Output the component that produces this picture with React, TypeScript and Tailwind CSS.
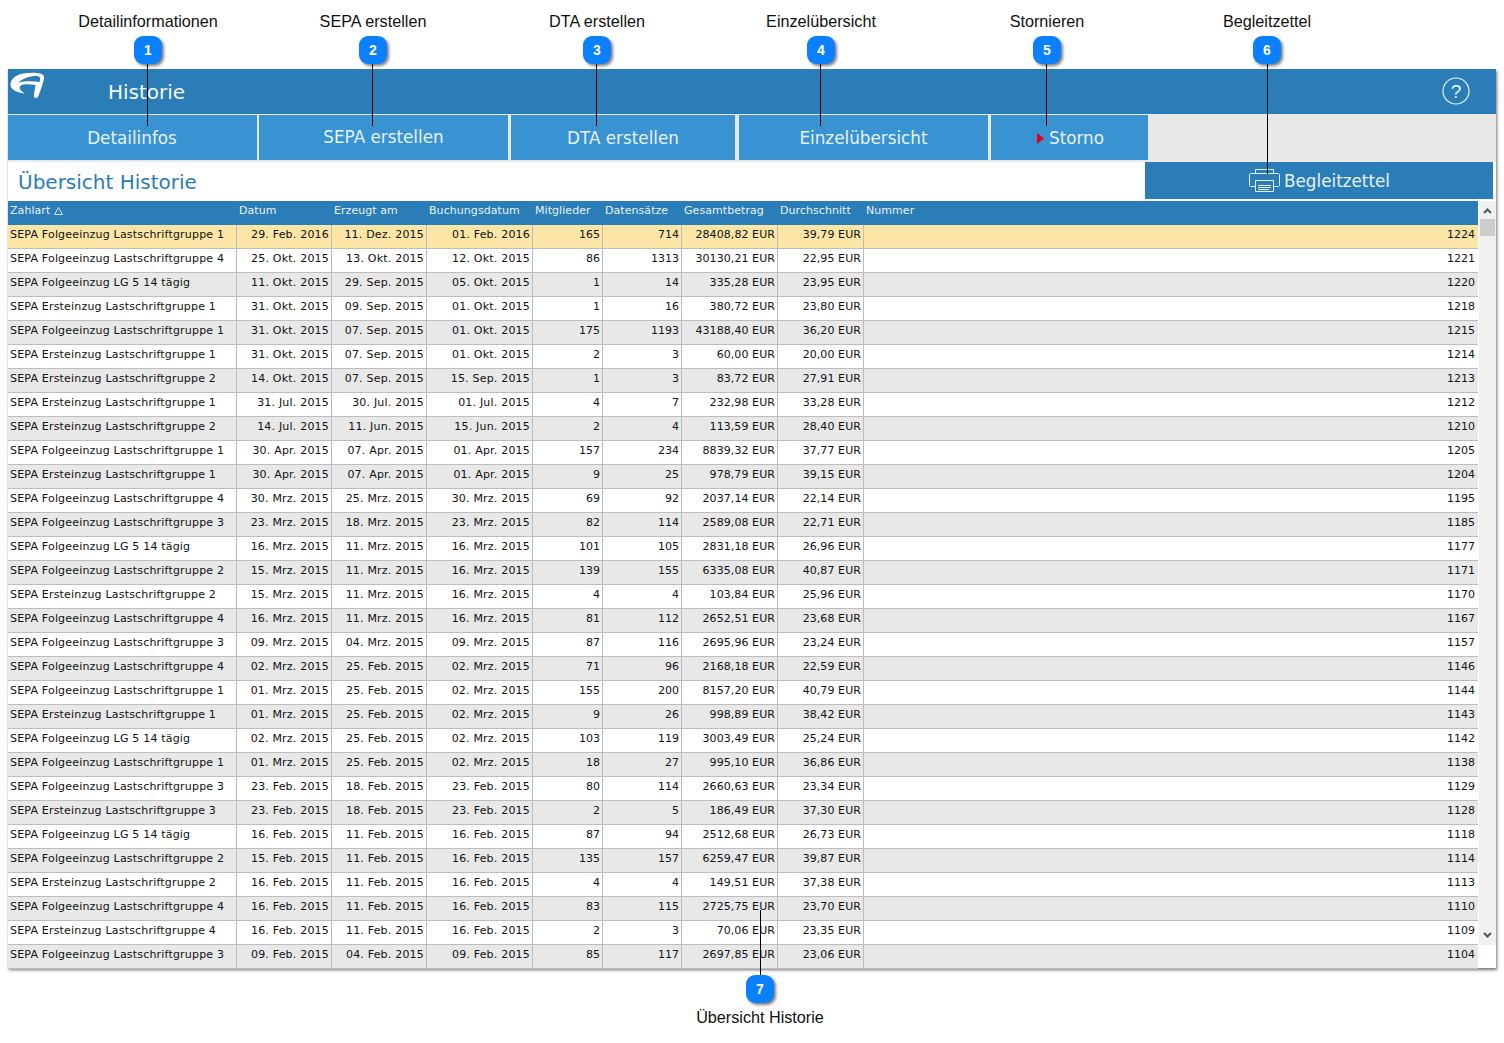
const rows: string[][] = `SEPA Folgeeinzug Lastschriftgruppe 1|29. Feb. 2016|11. Dez. 2015|01. Feb. 2016|165|714|28408,82 EUR|39,79 EUR|1224
SEPA Folgeeinzug Lastschriftgruppe 4|25. Okt. 2015|13. Okt. 2015|12. Okt. 2015|86|1313|30130,21 EUR|22,95 EUR|1221
SEPA Folgeeinzug LG 5 14 tägig|11. Okt. 2015|29. Sep. 2015|05. Okt. 2015|1|14|335,28 EUR|23,95 EUR|1220
SEPA Ersteinzug Lastschriftgruppe 1|31. Okt. 2015|09. Sep. 2015|01. Okt. 2015|1|16|380,72 EUR|23,80 EUR|1218
SEPA Folgeeinzug Lastschriftgruppe 1|31. Okt. 2015|07. Sep. 2015|01. Okt. 2015|175|1193|43188,40 EUR|36,20 EUR|1215
SEPA Ersteinzug Lastschriftgruppe 1|31. Okt. 2015|07. Sep. 2015|01. Okt. 2015|2|3|60,00 EUR|20,00 EUR|1214
SEPA Ersteinzug Lastschriftgruppe 2|14. Okt. 2015|07. Sep. 2015|15. Sep. 2015|1|3|83,72 EUR|27,91 EUR|1213
SEPA Ersteinzug Lastschriftgruppe 1|31. Jul. 2015|30. Jul. 2015|01. Jul. 2015|4|7|232,98 EUR|33,28 EUR|1212
SEPA Ersteinzug Lastschriftgruppe 2|14. Jul. 2015|11. Jun. 2015|15. Jun. 2015|2|4|113,59 EUR|28,40 EUR|1210
SEPA Folgeeinzug Lastschriftgruppe 1|30. Apr. 2015|07. Apr. 2015|01. Apr. 2015|157|234|8839,32 EUR|37,77 EUR|1205
SEPA Ersteinzug Lastschriftgruppe 1|30. Apr. 2015|07. Apr. 2015|01. Apr. 2015|9|25|978,79 EUR|39,15 EUR|1204
SEPA Folgeeinzug Lastschriftgruppe 4|30. Mrz. 2015|25. Mrz. 2015|30. Mrz. 2015|69|92|2037,14 EUR|22,14 EUR|1195
SEPA Folgeeinzug Lastschriftgruppe 3|23. Mrz. 2015|18. Mrz. 2015|23. Mrz. 2015|82|114|2589,08 EUR|22,71 EUR|1185
SEPA Folgeeinzug LG 5 14 tägig|16. Mrz. 2015|11. Mrz. 2015|16. Mrz. 2015|101|105|2831,18 EUR|26,96 EUR|1177
SEPA Folgeeinzug Lastschriftgruppe 2|15. Mrz. 2015|11. Mrz. 2015|16. Mrz. 2015|139|155|6335,08 EUR|40,87 EUR|1171
SEPA Ersteinzug Lastschriftgruppe 2|15. Mrz. 2015|11. Mrz. 2015|16. Mrz. 2015|4|4|103,84 EUR|25,96 EUR|1170
SEPA Folgeeinzug Lastschriftgruppe 4|16. Mrz. 2015|11. Mrz. 2015|16. Mrz. 2015|81|112|2652,51 EUR|23,68 EUR|1167
SEPA Folgeeinzug Lastschriftgruppe 3|09. Mrz. 2015|04. Mrz. 2015|09. Mrz. 2015|87|116|2695,96 EUR|23,24 EUR|1157
SEPA Folgeeinzug Lastschriftgruppe 4|02. Mrz. 2015|25. Feb. 2015|02. Mrz. 2015|71|96|2168,18 EUR|22,59 EUR|1146
SEPA Folgeeinzug Lastschriftgruppe 1|01. Mrz. 2015|25. Feb. 2015|02. Mrz. 2015|155|200|8157,20 EUR|40,79 EUR|1144
SEPA Ersteinzug Lastschriftgruppe 1|01. Mrz. 2015|25. Feb. 2015|02. Mrz. 2015|9|26|998,89 EUR|38,42 EUR|1143
SEPA Folgeeinzug LG 5 14 tägig|02. Mrz. 2015|25. Feb. 2015|02. Mrz. 2015|103|119|3003,49 EUR|25,24 EUR|1142
SEPA Folgeeinzug Lastschriftgruppe 1|01. Mrz. 2015|25. Feb. 2015|02. Mrz. 2015|18|27|995,10 EUR|36,86 EUR|1138
SEPA Folgeeinzug Lastschriftgruppe 3|23. Feb. 2015|18. Feb. 2015|23. Feb. 2015|80|114|2660,63 EUR|23,34 EUR|1129
SEPA Ersteinzug Lastschriftgruppe 3|23. Feb. 2015|18. Feb. 2015|23. Feb. 2015|2|5|186,49 EUR|37,30 EUR|1128
SEPA Folgeeinzug LG 5 14 tägig|16. Feb. 2015|11. Feb. 2015|16. Feb. 2015|87|94|2512,68 EUR|26,73 EUR|1118
SEPA Folgeeinzug Lastschriftgruppe 2|15. Feb. 2015|11. Feb. 2015|16. Feb. 2015|135|157|6259,47 EUR|39,87 EUR|1114
SEPA Ersteinzug Lastschriftgruppe 2|16. Feb. 2015|11. Feb. 2015|16. Feb. 2015|4|4|149,51 EUR|37,38 EUR|1113
SEPA Folgeeinzug Lastschriftgruppe 4|16. Feb. 2015|11. Feb. 2015|16. Feb. 2015|83|115|2725,75 EUR|23,70 EUR|1110
SEPA Ersteinzug Lastschriftgruppe 4|16. Feb. 2015|11. Feb. 2015|16. Feb. 2015|2|3|70,06 EUR|23,35 EUR|1109
SEPA Folgeeinzug Lastschriftgruppe 3|09. Feb. 2015|04. Feb. 2015|09. Feb. 2015|85|117|2697,85 EUR|23,06 EUR|1104`
  .split("\n")
  .map((l) => l.split("|"));

const cols = "grid-cols-[229px_95px_95px_106px_70px_79px_96px_86px_614px]";
const heads = ["Zahlart", "Datum", "Erzeugt am", "Buchungsdatum", "Mitglieder", "Datensätze", "Gesamtbetrag", "Durchschnitt", "Nummer"];
const callouts = [
  { n: 1, x: 148, label: "Detailinformationen", end: 126 },
  { n: 2, x: 373, label: "SEPA erstellen", end: 126 },
  { n: 3, x: 597, label: "DTA erstellen", end: 126 },
  { n: 4, x: 821, label: "Einzelübersicht", end: 126 },
  { n: 5, x: 1047, label: "Stornieren", end: 126 },
  { n: 6, x: 1267, label: "Begleitzettel", end: 174 },
];
const Badge = ({ n, x, y }: { n: number; x: number; y: number }) => (
  <div
    className="absolute w-[28px] h-[28px] rounded-[9px] bg-[#0a80ff] text-white flex items-center justify-center text-[14px] font-bold shadow-[2px_2px_3px_rgba(0,0,0,0.5)] font-['Liberation_Sans',sans-serif]"
    style={{ left: x - 14, top: y }}
  >
    {n}
  </div>
);
const Line = ({ x, top, bottom }: { x: number; top: number; bottom: number }) => (
  <div className="absolute w-[1px] bg-black" style={{ left: x, top, height: bottom - top }} />
);
const Label = ({ x, y, text }: { x: number; y: number; text: string }) => (
  <div className="absolute w-[200px] text-center text-[16.2px] leading-[18px] text-[#111] font-['Liberation_Sans',sans-serif]" style={{ left: x - 100, top: y }}>
    {text}
  </div>
);

function cellClass(j: number) {
  if (j === 0) return "pl-[2px] tracking-[0.19px] border-r border-[#bdbdbd]";
  if (j === 8) return "pr-[3px] text-right";
  if (j <= 3) return "pr-[2px] text-right tracking-[0.2px] border-r border-[#bdbdbd]";
  if (j === 6 || j === 7) return "pr-[2px] text-right tracking-[0.08px] border-r border-[#bdbdbd]";
  return "pr-[2px] text-right border-r border-[#bdbdbd]";
}

export default function App() {
  return (
    <div className="relative w-[1504px] h-[1043px] bg-white overflow-hidden font-['DejaVu_Sans','Verdana',sans-serif]">
      <div className="pt-[69px] pl-[8px]">
        <div className="w-[1488px] h-[899px] bg-[#e8e8e8] shadow-[1px_2px_3px_rgba(0,0,0,0.55)] flex flex-col">
          <header className="h-[45px] shrink-0 bg-[#2a7db6] flex items-start relative text-white">
            <svg width="38" height="32" viewBox="0 0 38 32" className="mt-[1px] shrink-0">
              <path
                fillRule="evenodd"
                fill="#fff"
                d="M2.5 13.5C3.5 8 9 4.5 15 3.5 21 2.6 28 2.6 32 3.5 35 4.2 36.5 5.5 36 8.5 35 14 32 22 30 27 29 28.5 26.5 28.3 25.8 27 26 23 27 19 27.5 15 23 14.2 18 14 14.5 14.8 12 15.5 11 17.5 12.5 20 14 21.5 15.5 22.5 16.5 23.5 12 23 5 21 3 17 2.6 15.7 2.4 14.5 2.5 13.5ZM10.5 12.5C15 8.5 21 6 28 6 32 6 33 8 31.5 12 25 11 17 11 10.5 12.5Z"
              />
            </svg>
            <span className="ml-[62px] mt-[12px] text-[20px] leading-[23px] text-[#f4fbff]">Historie</span>
            <svg width="28" height="28" viewBox="0 0 28 28" className="absolute right-[26px] top-[8px]">
              <circle cx="14" cy="14" r="13" fill="none" stroke="#e9f3fa" strokeWidth="1.2" />
              <text x="14" y="20.5" textAnchor="middle" fontSize="19" fill="#e9f3fa" fontFamily="Liberation Sans">?</text>
            </svg>
          </header>
          <nav className="mt-[1px] h-[45px] shrink-0 flex text-[16.8px] text-[#e6f2fa]">
            <div className="w-[249px] bg-[#3993d2] flex items-center justify-center pr-[1px] pt-[2px]">Detailinfos</div>
            <div className="ml-[2px] w-[249px] bg-[#3993d2] flex items-center justify-center pt-[1px]">SEPA erstellen</div>
            <div className="ml-[3px] w-[224px] bg-[#3993d2] flex items-center justify-center pt-[2px]">DTA erstellen</div>
            <div className="ml-[4px] w-[249px] bg-[#3993d2] flex items-center justify-center pt-[2px]">Einzelübersicht</div>
            <div className="ml-[3px] w-[157px] bg-[#3993d2] flex items-center justify-center gap-[5px] pt-[2px] pl-[2px]">
              <svg width="7" height="11" viewBox="0 0 7 11"><path d="M0 0L7 5.5L0 11Z" fill="#e2001a" /></svg>
              <span>Storno</span>
            </div>
          </nav>
          <div className="mt-[2px] h-[39px] shrink-0 bg-white flex items-start justify-between">
            <div className="pl-[10px] pt-[1px] text-[20px] leading-[39px] text-[#2a7db6]">Übersicht Historie</div>
            <div className="w-[348px] h-[37px] mr-[3px] bg-[#2a7db6] flex items-center justify-center gap-[4px] text-[16.8px] text-[#e6f2fa]">
              <svg width="31" height="23" viewBox="0 0 31 23" fill="none" stroke="#e6f2fa" strokeWidth="1" className="ml-[1px]">
                <path d="M6.5 4.5V.5H24.5V4.5" />
                <path d="M6.5 17.5H2C1 17.5.5 17 .5 16V6C.5 5 1 4.5 2 4.5H29C30 4.5 30.5 5 30.5 6V16C30.5 17 30 17.5 29 17.5H24.5" />
                <path d="M6.5 11.5H24.5V22.5H6.5Z" fill="#2a7db6" />
                <path d="M9 16.5H22M9 18.5H22M9 20.5H20" />
              </svg>
              <span className="pt-[3px]">Begleitzettel</span>
            </div>
          </div>
          <div className="flex flex-1 min-h-0 items-start bg-white">
            <div className="w-[1470px] shrink-0">
              <div className={`grid ${cols} h-[24px] bg-[#2a7db6] text-[11px] leading-[20px] tracking-[0.06px] text-[#e6f2fa]`}>
                {heads.map((h, i) => (
                  <div key={h} className="pl-[2px] whitespace-nowrap">
                    {h}
                    {i === 0 && (
                      <svg width="9" height="8" viewBox="0 0 9 8" className="inline-block ml-[4px] align-[-1px]">
                        <path d="M4.5 .5L8.5 7.5H.5Z" fill="none" stroke="#e6f2fa" strokeWidth=".9" />
                      </svg>
                    )}
                  </div>
                ))}
              </div>
              {rows.map((r, i) => (
                <div
                  key={r[8]}
                  className={`grid ${cols} h-[24px] border-b border-[#bdbdbd] text-[11px] leading-[20px] text-[#111] ${
                    i === 0 ? "bg-[#fce5a5]" : i % 2 === 0 ? "bg-[#e8e8e8]" : "bg-white"
                  }`}
                >
                  {r.map((c, j) => (
                    <div key={j} className={`h-[23px] whitespace-nowrap ${cellClass(j)}`}>
                      {c}
                    </div>
                  ))}
                </div>
              ))}
            </div>
            <div className="w-[17px] h-[744px] bg-[#f0f0f0] ml-[1px] flex flex-col items-center shrink-0">
              <svg width="9" height="6" viewBox="0 0 9 6" className="mt-[7px]"><path d="M1 5L4.5 1.5L8 5" fill="none" stroke="#555" strokeWidth="2" /></svg>
              <div className="mt-[5px] w-[15px] h-[17px] bg-[#cdcdcd]" />
              <div className="flex-1" />
              <svg width="9" height="6" viewBox="0 0 9 6" className="mb-[7px]"><path d="M1 1L4.5 4.5L8 1" fill="none" stroke="#555" strokeWidth="2" /></svg>
            </div>
          </div>
        </div>
      </div>

      {callouts.map((c) => (
        <div key={c.n}>
          <Label x={c.x} y={12} text={c.label} />
          <Line x={c.x - (c.n <= 5 ? 1 : 0)} top={64} bottom={c.end} />
          <Badge n={c.n} x={c.x} y={36} />
        </div>
      ))}
      <Line x={760} top={910} bottom={976} />
      <Badge n={7} x={760} y={975} />
      <Label x={760} y={1008} text="Übersicht Historie" />
    </div>
  );
}
